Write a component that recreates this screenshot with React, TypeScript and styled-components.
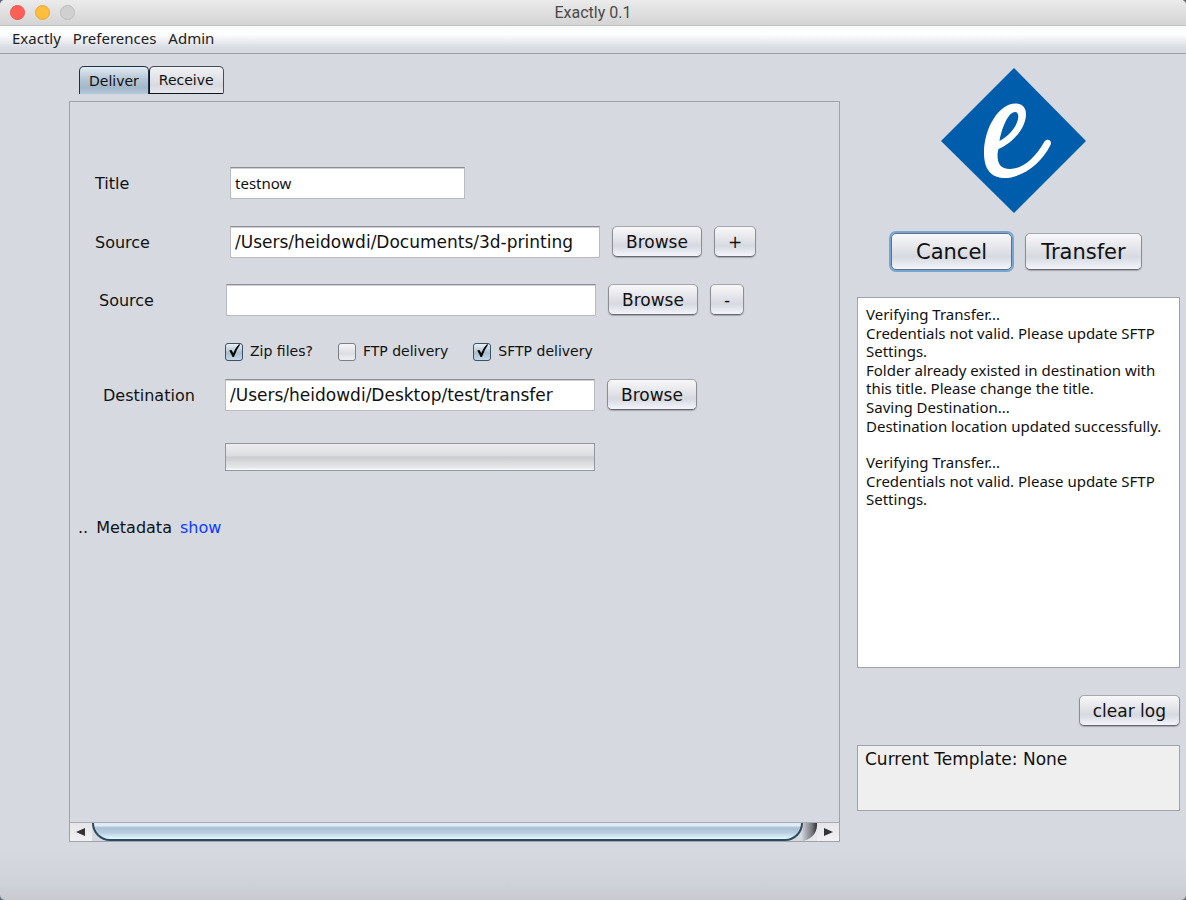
import React, { useState } from "react";
import styled, { createGlobalStyle, css } from "styled-components";

const verdana = `"DejaVu Sans", Verdana, sans-serif`;
const lucida = `"Noto Sans", "Lucida Grande", sans-serif`;

const GlobalStyle = createGlobalStyle`
  * { box-sizing: border-box; }
  body { margin: 0; background: #5c6c80; color: #111; font-family: ${verdana}; font-size: 16px; }
  button, input { font: inherit; color: inherit; margin: 0; }
`;

const Window = styled.div`
  display: flex;
  flex-direction: column;
  min-height: 100vh;
  border-radius: 5px;
  overflow: hidden;
  background: linear-gradient(to top, #c8cad0 0, #d0d3da 20px, #d6d9e0 50px);
`;

const TitleBar = styled.header`
  display: grid;
  grid-template-columns: 1fr auto 1fr;
  align-items: center;
  height: 26px;
  padding: 0 10px;
  background: linear-gradient(#ebebeb, #d4d4d4);
  border-bottom: 1px solid #c2c2c2;
`;

const Lights = styled.div`
  display: flex;
  gap: 10px;
`;

const Light = styled.button<{ $fill: string; $edge: string }>`
  width: 15px;
  height: 15px;
  padding: 0;
  border-radius: 50%;
  border: 1px solid ${(p) => p.$edge};
  background: ${(p) => p.$fill};
`;

const WindowTitle = styled.h1`
  margin: 0;
  font: 400 16px/24px Roboto, sans-serif;
  color: #4a4a4a;
`;

const MenuBar = styled.nav`
  display: flex;
  align-items: center;
  gap: 12px;
  height: 28px;
  padding: 0 12px 3px;
  font: 15px/20px ${lucida};
  background: linear-gradient(#f8faf9, #fff 30%, #d9dce3 80%, #d6d9e0);
  border-bottom: 1px solid #9a9fa8;
`;

const MenuItem = styled.button`
  padding: 0;
  border: 0;
  background: none;
  color: #222;
`;

const Body = styled.main`
  display: flex;
  flex: 1;
  gap: 17px;
  padding: 12px 6px 58px 69px;
`;

const Workspace = styled.section`
  display: flex;
  flex: 1;
  flex-direction: column;
  min-width: 0;
`;

const Tabs = styled.div`
  display: flex;
  padding-left: 10px;
  margin-bottom: 7px;
`;

const Tab = styled.button<{ $active?: boolean }>`
  height: 28px;
  padding: 0 9px;
  font-size: 14px;
  border: 1px solid #4b4b56;
  border-radius: 5px 5px 0 0;
  ${(p) =>
    p.$active
      ? css`
          border-color: #1f3245;
          border-bottom: 0;
          background: linear-gradient(#e3ebf1, #b4c6d5 45%, #a2b8ca 75%, #b4c9da);
        `
      : css`
          border-left-color: #14141f;
          border-bottom: 1px solid #14141f;
          border-radius: 5px 5px 2px 0;
          background: linear-gradient(#f0f1f4, #e0e1e6 50%, #d8dae0 70%, #e6e8ee);
        `}
`;

const Panel = styled.div`
  display: flex;
  flex: 1;
  flex-direction: column;
  border: 1px solid #9ea2ab;
`;

const Form = styled.form`
  flex: 1;
  padding: 65px 8px 0;
`;

const Row = styled.div<{ $inset: number; $label: number; $gap?: number }>`
  display: grid;
  grid-template-columns: ${(p) => p.$label}px minmax(0, 370px) auto;
  justify-content: start;
  align-items: center;
  min-height: 32px;
  margin-bottom: ${(p) => p.$gap ?? 26}px;
  padding-left: ${(p) => p.$inset}px;
`;

const Field = styled.input<{ $short?: boolean }>`
  width: ${(p) => (p.$short ? "235px" : "100%")};
  height: 32px;
  padding: 0 4px;
  font-size: 17px;
  border: 1px solid #b9bbc0;
  border-top: 1px solid #8d8f95;
  border-radius: 0;
  outline: 0;
  background: #fff;
  box-shadow: inset 0 1px 0 #cfd0d3;
  ${(p) => p.$short && css`font: 15px ${lucida};`}
`;

const Button = styled.button<{ $large?: boolean; $focus?: boolean }>`
  height: ${(p) => (p.$large ? 37 : 31)}px;
  padding: 0 ${(p) => (p.$large ? 15 : 13)}px;
  font-size: ${(p) => (p.$large ? 21 : 17)}px;
  border: 1px solid #8b8e95;
  border-top-color: #a5a7ac;
  border-bottom-color: #66686e;
  border-radius: 5px;
  background: linear-gradient(#f8f8fa, #e2e3e8 45%, #d6d9e0 65%, #f3f5fb);
  box-shadow: 0 1px 1px #a3a6ad;
  ${(p) =>
    p.$focus &&
    css`
      padding: 0 24px;
      border-color: #5d7286;
      box-shadow: 0 0 0 2px #74a5d3;
    `}
`;

const Actions = styled.div`
  display: flex;
  align-self: start;
  gap: 12px;
  padding-left: 12px;
`;

const Options = styled.div`
  display: flex;
  gap: 25px;
  margin-bottom: 18px;
  padding-left: 147px;
  font-size: 14px;
  line-height: 19px;
`;

const Option = styled.label`
  display: flex;
  align-items: center;
  gap: 7px;
`;

const Box = styled.span`
  display: grid;
  width: 18px;
  height: 18px;

  > * { grid-area: 1 / 1; }
  svg { pointer-events: none; visibility: hidden; }
  input:checked + svg { visibility: visible; }
`;

const Tick = styled.input`
  appearance: none;
  width: 18px;
  height: 18px;
  border: 1px solid #7c7f86;
  border-radius: 3px;
  background: linear-gradient(#f6f6f8, #dcdee4 60%, #eef0f5);

  &:checked {
    border-color: #3e5063;
    background: linear-gradient(#eaf1f6, #a9bfd0 55%, #c3d8e8);
  }
`;

const Progress = styled.div`
  grid-column: 2;
  height: 28px;
  border: 1px solid #92959c;
  background: linear-gradient(#ededef, #dcdde0 45%, #cacbce 50%, #e8e9eb 92%, #fff);
`;

const Metadata = styled.p`
  display: flex;
  gap: 8px;
  margin: 45px 0 0;
  line-height: 20px;

  a { color: #0a3cff; text-decoration: none; }
`;

const ScrollBar = styled.div`
  display: flex;
  height: 19px;
  border-top: 1px solid #a9acb3;
  background: #e6e7ea;
`;

const Arrow = styled.button`
  display: grid;
  place-items: center;
  width: 22px;
  padding: 0;
  border: 0;
  background: linear-gradient(#e6e6e9, #f1f1f3);
`;

const Track = styled.div`
  flex: 1;
  padding-right: 14px;
  border-radius: 0 0 16px 0;
  background: linear-gradient(to right, #d6d9e0 calc(100% - 16px), #77787e calc(100% - 5px), #2f3034);
`;

const Thumb = styled.div`
  height: 18px;
  border: solid #2f4a60;
  border-width: 0 2px 2px;
  border-radius: 0 0 18px 18px;
  background: linear-gradient(#dfe8f0, #e4edf4 15%, #a9c0d5 30%, #b8cee0 60%, #e2fbff);
`;

const Side = styled.aside`
  display: flex;
  flex-direction: column;
  width: 323px;
`;

const Logo = styled.svg`
  width: 147px;
  height: 147px;
  margin: 1px 0 0 83px;
`;

const MainActions = styled.div`
  display: flex;
  gap: 13px;
  margin: 19px 0 27px;
  padding-left: 34px;
`;

const Log = styled.div`
  flex: 1;
  max-height: 371px;
  min-height: 240px;
  padding: 7px 8px;
  border: 1px solid #9ea2ab;
  background: #fff;
  font: 15px/18px ${lucida};
`;

const LogGroup = styled.div`
  display: grid;
  gap: 1px;
  margin-bottom: 18px;

  p { margin: 0; }
`;

const ClearButton = styled(Button)`
  align-self: flex-end;
  margin: 27px 0 19px;
`;

const Template = styled.div`
  height: 66px;
  padding: 3px 7px;
  border: 1px solid #9ea2ab;
  background: #efefef;
  font-size: 17px;
  line-height: 20px;
`;

const log = [
  [
    "Verifying Transfer...",
    "Credentials not valid. Please update SFTP Settings.",
    "Folder already existed in destination with this title. Please change the title.",
    "Saving Destination...",
    "Destination location updated successfully.",
  ],
  ["Verifying Transfer...", "Credentials not valid. Please update SFTP Settings."],
];

function CheckOption({ label, checked }: { label: string; checked?: boolean }) {
  return (
    <Option>
      <Box>
        <Tick type="checkbox" defaultChecked={checked} />
        <svg viewBox="0 0 18 18" width="18" height="18" aria-hidden="true">
          <path d="M4.2 7.6 6.6 7l1.6 3.2Q10.5 4.500 14 1.300l1.200.2Q11.300 6.800 9 14H7.500Q6 10.500 4.200 7.600Z" fill="#000" />
        </svg>
      </Box>
      {label}
    </Option>
  );
}

export default function App() {
  const [tab, setTab] = useState("Deliver");
  return (
    <>
      <GlobalStyle />
      <Window>
        <TitleBar>
          <Lights>
            <Light aria-label="Close" $fill="#ff5f57" $edge="#e9534c" />
            <Light aria-label="Minimize" $fill="#ffbd3e" $edge="#e8a932" />
            <Light aria-label="Zoom" $fill="#d0d0d0" $edge="#bcbcbc" />
          </Lights>
          <WindowTitle>Exactly 0.1</WindowTitle>
        </TitleBar>
        <MenuBar>
          {["Exactly", "Preferences", "Admin"].map((m) => (
            <MenuItem key={m}>{m}</MenuItem>
          ))}
        </MenuBar>
        <Body>
          <Workspace>
            <Tabs role="tablist">
              {["Deliver", "Receive"].map((t) => (
                <Tab key={t} role="tab" aria-selected={tab === t} $active={tab === t} onClick={() => setTab(t)}>
                  {t}
                </Tab>
              ))}
            </Tabs>
            <Panel>
              <Form onSubmit={(e) => e.preventDefault()}>
                <Row $inset={17} $label={135} $gap={27}>
                  <label htmlFor="title">Title</label>
                  <Field id="title" $short defaultValue="testnow" />
                </Row>
                <Row $inset={17} $label={135}>
                  <label htmlFor="source1">Source</label>
                  <Field id="source1" defaultValue="/Users/heidowdi/Documents/3d-printing" />
                  <Actions>
                    <Button type="button">Browse</Button>
                    <Button type="button">+</Button>
                  </Actions>
                </Row>
                <Row $inset={21} $label={127}>
                  <label htmlFor="source2">Source</label>
                  <Field id="source2" />
                  <Actions>
                    <Button type="button">Browse</Button>
                    <Button type="button">-</Button>
                  </Actions>
                </Row>
                <Options>
                  <CheckOption label="Zip files?" checked />
                  <CheckOption label="FTP delivery" />
                  <CheckOption label="SFTP delivery" checked />
                </Options>
                <Row $inset={25} $label={122} $gap={30}>
                  <label htmlFor="destination">Destination</label>
                  <Field id="destination" defaultValue="/Users/heidowdi/Desktop/test/transfer" />
                  <Actions>
                    <Button type="button">Browse</Button>
                  </Actions>
                </Row>
                <Row $inset={25} $label={122} $gap={0}>
                  <Progress role="progressbar" aria-label="Transfer progress" />
                </Row>
                <Metadata>
                  <span>..</span>
                  <span>Metadata</span>
                  <a href="#metadata">show</a>
                </Metadata>
              </Form>
              <ScrollBar>
                <Arrow aria-label="Scroll left">
                  <svg width="10" height="10" viewBox="0 0 10 10"><path d="M0 5 9 1v8Z" fill="#333" /></svg>
                </Arrow>
                <Track>
                  <Thumb />
                </Track>
                <Arrow aria-label="Scroll right">
                  <svg width="10" height="10" viewBox="0 0 10 10"><path d="M10 5 1 1v8Z" fill="#333" /></svg>
                </Arrow>
              </ScrollBar>
            </Panel>
          </Workspace>
          <Side>
            <Logo viewBox="0 0 147 147" role="img" aria-label="Exactly">
              <path d="M74 1 146 74 74 146 1 74Z" fill="#005dab" />
              <path
                d="M58.500 82C73 76 86 61 86 47C86 40 81.500 36.500 75.500 36.500C59 36.500 44 61 44 86C44 102 51 111 64.500 111C82 111 101 97 110.500 78C112.500 73 107 71 104.500 74.500C95 91 83 102 70 102C61 102 57.500 97 57.500 88Q57.500 85 58.500 82ZM59.500 74C62 60 68.500 45 75 45C78.500 45 79 49 77.500 54C75 62 67.500 70 59.500 74Z"
                fill="#fff"
                fillRule="evenodd"
              />
            </Logo>
            <MainActions>
              <Button $large $focus>Cancel</Button>
              <Button $large>Transfer</Button>
            </MainActions>
            <Log role="log">
              {log.map((group, i) => (
                <LogGroup key={i}>
                  {group.map((line) => (
                    <p key={line}>{line}</p>
                  ))}
                </LogGroup>
              ))}
            </Log>
            <ClearButton>clear log</ClearButton>
            <Template>Current Template: None</Template>
          </Side>
        </Body>
      </Window>
    </>
  );
}
